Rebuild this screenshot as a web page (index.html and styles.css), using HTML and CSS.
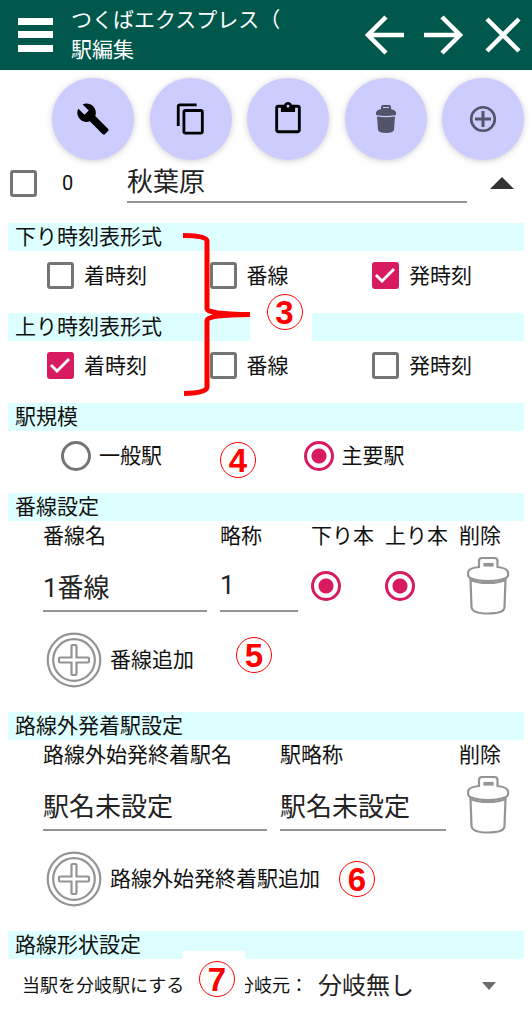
FILE: index.html
```html
<!DOCTYPE html>
<html lang="ja">
<head>
<meta charset="utf-8">
<meta name="viewport" content="width=device-width, initial-scale=1">
<title>駅編集</title>
<link rel="stylesheet" href="styles.css">
</head>
<body>
<svg class="defs" aria-hidden="true">
  <symbol id="trash" viewBox="0 0 44 60">
    <g fill="none" stroke="#949494" stroke-width="2.200">
      <path d="M12 11V5Q12 2 15 2H27.500Q30.500 2 30.500 5V11Q39 12 40.500 15Q42.500 20 39 22Q32 25 21 25Q10 25 3 22Q0 20 1.500 15Q3 12 12 11Z"/>
      <path d="M3.500 24Q10 27 21 27Q32 27 38.500 24L37.500 51Q37.500 57.500 21 57.500Q5 57.500 4.500 51Z"/>
      <path d="M17.500 8H25.500V9.500H17.500Z"/>
    </g>
  </symbol>
  <symbol id="add" viewBox="0 0 56 56">
    <g fill="none" stroke="#949494" stroke-width="2.200">
      <circle cx="28" cy="28" r="26.300"/>
      <circle cx="28" cy="28" r="20.800"/>
      <path d="M25.500 14Q25.500 13 26.500 13H29.500Q30.500 13 30.500 14V25.500H42Q43 25.500 43 26.500V29.500Q43 30.500 42 30.500H30.500V42Q30.500 43 29.500 43H26.500Q25.500 43 25.500 42V30.500H14Q13 30.500 13 29.500V26.500Q13 25.500 14 25.500H25.500Z"/>
    </g>
  </symbol>
</svg>

<div class="page">
  <header class="appbar">
    <button class="icon-btn" aria-label="メニュー">
      <svg width="36" height="36" viewBox="0 0 36 36"><path fill="#fff" d="M0 1h35v7H0zM0 14h35v7H0zM0 28h35v7H0z"/></svg>
    </button>
    <h1 class="title">つくばエクスプレス（<br>駅編集</h1>
    <nav class="nav">
      <button class="icon-btn" aria-label="前の駅">
        <svg width="40" height="40" viewBox="0 0 40 40"><path fill="none" stroke="#fff" stroke-width="4.500" d="M39 20H3M21 2L3 20L21 38"/></svg>
      </button>
      <button class="icon-btn" aria-label="次の駅">
        <svg width="40" height="40" viewBox="0 0 40 40"><path fill="none" stroke="#fff" stroke-width="4.500" d="M1 20H37M19 2L37 20L19 38"/></svg>
      </button>
      <button class="icon-btn close" aria-label="閉じる">
        <svg width="36" height="40" viewBox="0 0 36 40"><path stroke="#fff" stroke-width="4.500" d="M2 4L34 36M34 4L2 36"/></svg>
      </button>
    </nav>
  </header>

  <div class="fabs">
    <button class="fab" aria-label="設定">
      <svg width="34" height="34" viewBox="0 0 24 24"><path d="M22.700 19l-9.100-9.100c.9-2.300.4-5-1.500-6.900-2-2-5-2.400-7.400-1.300L9 6 6 9 1.600 4.700C.4 7.100.9 10.100 2.900 12.100c1.900 1.900 4.600 2.400 6.900 1.500l9.100 9.100c.4.4 1 .4 1.400 0l2.300-2.300c.5-.4.500-1.100.1-1.400z"/></svg>
    </button>
    <button class="fab" aria-label="コピー">
      <svg width="34" height="34" viewBox="0 0 24 24"><path d="M16 1H4c-1.100 0-2 .9-2 2v14h2V3h12V1zm3 4H8c-1.100 0-2 .9-2 2v14c0 1.100.9 2 2 2h11c1.100 0 2-.9 2-2V7c0-1.100-.9-2-2-2zm0 16H8V7h11v14z"/></svg>
    </button>
    <button class="fab" aria-label="貼り付け">
      <svg width="34" height="34" viewBox="0 0 24 24"><path d="M19 2h-4.180C14.400.84 13.300 0 12 0S9.600.84 9.180 2H5c-1.100 0-2 .9-2 2v16c0 1.100.9 2 2 2h14c1.100 0 2-.9 2-2V4c0-1.100-.9-2-2-2zm-7 0c.55 0 1 .45 1 1s-.45 1-1 1-1-.45-1-1 .45-1 1-1zm7 18H5V4h2v3h10V4h2v16z"/></svg>
    </button>
    <button class="fab" aria-label="削除">
      <svg width="22" height="28" viewBox="0 0 22 28"><path fill="#53536a" fill-rule="evenodd" d="M6 4V2Q6 0 8 0H14Q16 0 16 2V4Q20 5 21 7V10Q11 12 1 10V7Q2 5 6 4ZM8 3H14V2H8ZM2 11.500Q11 13 20 11.500L19 25Q18 28 11 28Q4 28 3 25Z"/></svg>
    </button>
    <button class="fab" aria-label="追加">
      <svg width="28" height="28" viewBox="0 0 28 28"><path fill="none" stroke="#53536a" stroke-width="3" d="M14 6V22M6 14H22"/><circle cx="14" cy="14" r="11.800" fill="none" stroke="#53536a" stroke-width="2.600"/></svg>
    </button>
  </div>

  <main>
    <div class="station">
      <input class="check" type="checkbox" aria-label="駅を選択">
      <span class="index">0</span>
      <input class="field" type="text" value="秋葉原" aria-label="駅名">
      <button class="icon-btn fold" aria-label="折りたたむ">
        <svg width="24" height="12" viewBox="0 0 24 12"><path fill="#333" d="M0 12L12 0L24 12Z"/></svg>
      </button>
    </div>

    <section class="section">
      <h2 class="bar">下り時刻表形式</h2>
      <div class="options">
        <label class="option"><input class="check" type="checkbox">着時刻</label>
        <label class="option"><input class="check" type="checkbox">番線</label>
        <label class="option"><input class="check" type="checkbox" checked>発時刻</label>
      </div>
    </section>

    <section class="section">
      <h2 class="bar">上り時刻表形式</h2>
      <div class="options">
        <label class="option"><input class="check" type="checkbox" checked>着時刻</label>
        <label class="option"><input class="check" type="checkbox">番線</label>
        <label class="option"><input class="check" type="checkbox">発時刻</label>
      </div>
    </section>

    <section class="section">
      <h2 class="bar">駅規模</h2>
      <div class="options scale">
        <label class="option"><input class="radio" type="radio" name="scale">一般駅</label>
        <label class="option"><input class="radio" type="radio" name="scale" checked>主要駅</label>
      </div>
    </section>

    <section class="section">
      <h2 class="bar">番線設定</h2>
      <table class="grid">
        <colgroup><col class="c-track"><col class="c-short"><col class="c-main"><col class="c-main"><col></colgroup>
        <thead><tr><th>番線名</th><th>略称</th><th>下り本</th><th>上り本</th><th>削除</th></tr></thead>
        <tbody>
          <tr>
            <td><input class="field" type="text" value="1番線" aria-label="番線名"></td>
            <td><input class="field" type="text" value="1" aria-label="略称"></td>
            <td><input class="radio" type="radio" name="down" checked aria-label="下り本"></td>
            <td><input class="radio" type="radio" name="up" checked aria-label="上り本"></td>
            <td><button class="icon-btn del" aria-label="削除"><svg width="44" height="60"><use href="#trash"/></svg></button></td>
          </tr>
        </tbody>
      </table>
      <button class="add"><svg width="56" height="56"><use href="#add"/></svg>番線追加</button>
    </section>

    <section class="section">
      <h2 class="bar">路線外発着駅設定</h2>
      <table class="grid">
        <colgroup><col class="c-outer"><col class="c-abbr"><col></colgroup>
        <thead><tr><th>路線外始発終着駅名</th><th>駅略称</th><th>削除</th></tr></thead>
        <tbody>
          <tr>
            <td><input class="field" type="text" value="駅名未設定" aria-label="路線外始発終着駅名"></td>
            <td><input class="field" type="text" value="駅名未設定" aria-label="駅略称"></td>
            <td><button class="icon-btn del" aria-label="削除"><svg width="44" height="60"><use href="#trash"/></svg></button></td>
          </tr>
        </tbody>
      </table>
      <button class="add"><svg width="56" height="56"><use href="#add"/></svg>路線外始発終着駅追加</button>
    </section>

    <section class="section">
      <h2 class="bar">路線形状設定</h2>
      <div class="shape">
        <span class="branch">当駅を分岐駅にする</span>
        <label for="origin">分岐元：</label>
        <div class="select">
          <select id="origin"><option>分岐無し</option></select>
          <svg width="14" height="8" viewBox="0 0 14 8"><path fill="#6c6c6c" d="M0 0H14L7 8Z"/></svg>
        </div>
      </div>
    </section>
  </main>

  <svg class="brace" width="68" height="164" viewBox="0 0 68 164" aria-hidden="true">
    <path fill="none" stroke="#f00" stroke-width="5" d="M0 3.500Q24 3.500 24 9V77Q24 82 67 82.500Q24 83 24 88V155Q24 161 1 161.500"/>
  </svg>
  <span class="note n3"><b>3</b></span>
  <span class="note n4"><b>4</b></span>
  <span class="note n5"><b>5</b></span>
  <span class="note n6"><b>6</b></span>
  <span class="note n7"><b>7</b></span>
</div>
</body>
</html>
```
FILE: styles.css
```css
* {
  box-sizing: border-box;
}

body {
  margin: 0;
  background: #fff;
  color: #111;
  font-family: Roboto, "Noto Sans CJK JP", sans-serif;
  font-size: 21px;
  line-height: 30px;
}

button,
input,
select {
  margin: 0;
  padding: 0;
  border: 0;
  background: none;
  color: inherit;
  font: inherit;
}

svg {
  display: block;
  flex: none;
}

.defs {
  position: absolute;
  width: 0;
  height: 0;
}

.page {
  position: relative;
}

.icon-btn {
  display: block;
  flex: none;
}

.appbar {
  display: flex;
  align-items: center;
  height: 70px;
  padding: 0 11px 0 18px;
  background: #00574b;
  color: #fff;
}

.title {
  flex: 1;
  margin: 0 0 0 17px;
  font-size: 21px;
  font-weight: 400;
  white-space: nowrap;
}

.nav {
  display: flex;
  gap: 18px;
}

.close {
  margin-left: 4px;
}

.fabs {
  display: flex;
  justify-content: space-between;
  padding: 8px 8px 0 52px;
}

.fab {
  display: flex;
  align-items: center;
  justify-content: center;
  width: 82px;
  height: 82px;
  border-radius: 50%;
  background: #ccf;
  box-shadow: 0 1px 6px rgba(0, 0, 0, 0.2);
}

.station {
  display: flex;
  align-items: center;
  height: 46px;
  padding: 0 18px 0 10px;
}

.index {
  width: 65px;
  margin-left: 25px;
  font-size: 20px;
}

.station .field {
  flex: 1;
  min-width: 0;
  padding-bottom: 6px;
}

.fold {
  margin-left: 23px;
}

.field {
  display: block;
  height: 40px;
  border-bottom: 2px solid #949494;
  color: #222;
  font-size: 26px;
  outline: none;
}

.section {
  padding-bottom: 13px;
}

main {
  padding-bottom: 2px;
}

.station + .section {
  margin-top: 17px;
}

.bar {
  margin: 0 8px;
  padding-left: 7px;
  background: #dff;
  font-size: 21px;
  font-weight: 400;
  line-height: 28px;
}

.options {
  display: grid;
  grid-template-columns: 1fr 1fr 160px;
  align-items: center;
  height: 49px;
  padding-left: 47px;
}

.scale {
  grid-template-columns: repeat(2, 1fr);
}

.scale .option {
  gap: 8px;
  padding-left: 14px;
}

.option {
  display: flex;
  align-items: center;
  gap: 10px;
}

.check {
  flex: none;
  width: 27px;
  height: 27px;
  border: 3px solid #757575;
  border-radius: 3px;
  appearance: none;
}

.check:checked {
  border-color: #d81b60;
  background: #d81b60;
}

.check:checked::after {
  content: "";
  display: block;
  width: 21px;
  height: 21px;
  background: #fff;
  clip-path: polygon(0 11px, 2px 9px, 7px 14px, 18px 3px, 20px 5px, 7px 18px);
}

.radio {
  display: block;
  flex: none;
  width: 30px;
  height: 30px;
  border: 3px solid #757575;
  border-radius: 50%;
  appearance: none;
}

.radio:checked {
  border-color: #d81b60;
  background: radial-gradient(circle, #d81b60 7px, transparent 8px);
}

.grid {
  width: calc(100% - 43px);
  margin-left: 43px;
  border-collapse: collapse;
  table-layout: fixed;
}

.grid th {
  height: 30px;
  padding: 0;
  font-weight: 400;
  text-align: left;
  white-space: nowrap;
}

.grid td {
  height: 70px;
  padding: 0;
}

.grid .field {
  width: calc(100% - 13px);
  height: 52px;
}

.c-track {
  width: 177px;
}

.c-short {
  width: 91px;
}

.c-main {
  width: 74px;
}

.c-outer {
  width: 237px;
}

.c-abbr {
  width: 179px;
}

.del {
  margin-left: 8px;
}

.add {
  display: flex;
  align-items: center;
  gap: 8px;
  height: 78px;
  margin-left: 46px;
}

.shape {
  display: flex;
  align-items: center;
  height: 54px;
  padding: 0 36px 0 22px;
  font-size: 18px;
  white-space: nowrap;
}

.branch {
  width: 214px;
}

.select {
  display: flex;
  flex: 1;
  align-items: center;
  margin-left: 10px;
  font-size: 24px;
}

.select select {
  flex: 1;
  height: 40px;
  color: #222;
  appearance: none;
}

/* Callouts laid over the form */
.brace {
  position: absolute;
  top: 232px;
  left: 183px;
}

.note {
  position: absolute;
  display: flex;
  align-items: center;
  justify-content: center;
  width: 68px;
  height: 56px;
  color: #f00;
  font-family: "Liberation Sans", Arial, sans-serif;
}

.note b {
  width: 36px;
  height: 36px;
  border: 1px solid #f00;
  border-radius: 50%;
  font-size: 33px;
  line-height: 36px;
  text-align: center;
}

.n3 {
  top: 290px;
  left: 250px;
  align-items: flex-start;
  width: 62px;
  height: 52px;
  padding: 4px 0 0 7px;
  background: #fff;
}

.n4 {
  top: 432px;
  left: 204px;
}

.n5 {
  top: 627px;
  left: 220px;
}

.n6 {
  top: 851px;
  left: 323px;
}

.n7 {
  top: 951px;
  left: 183px;
  width: 62px;
  padding-left: 6px;
  background: #fff;
}
```
